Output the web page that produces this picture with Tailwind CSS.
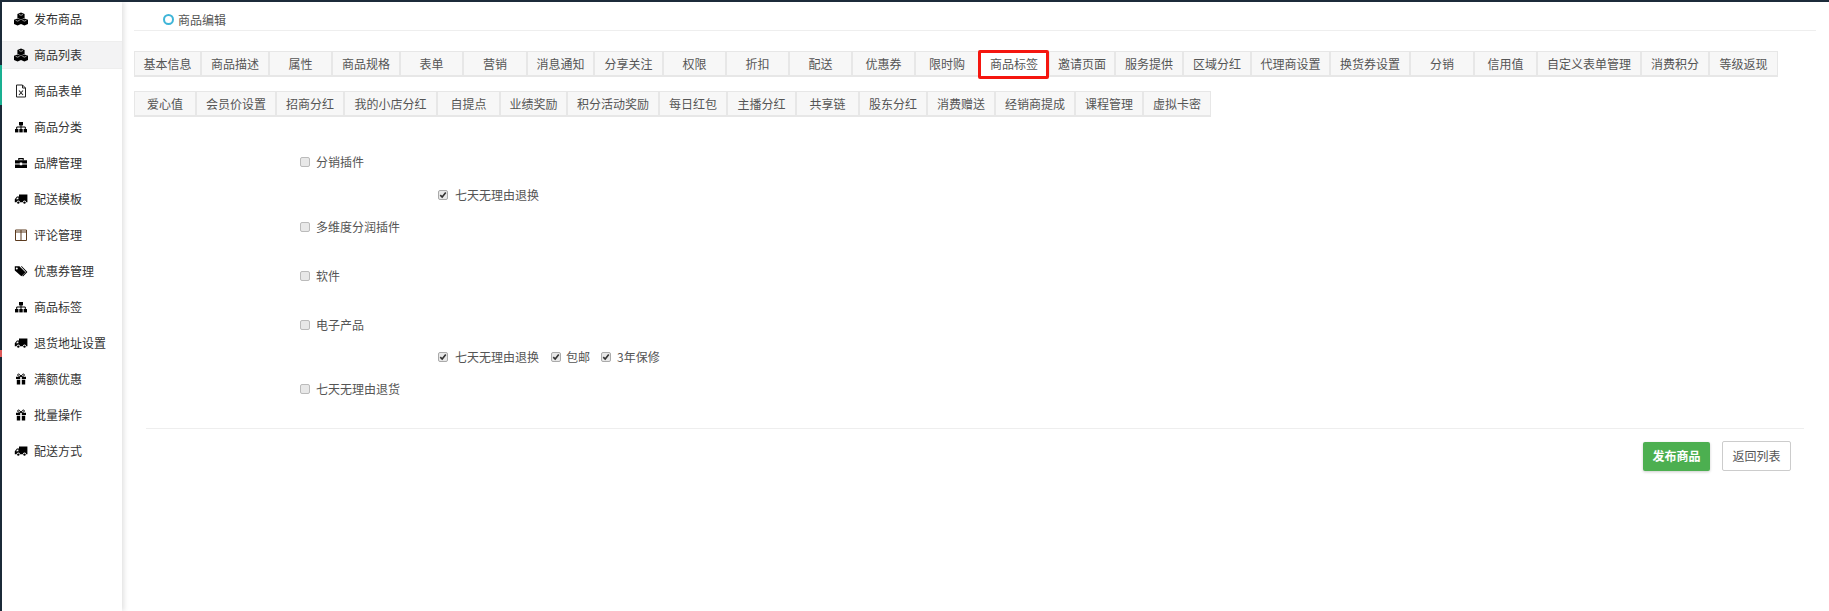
<!DOCTYPE html>
<html lang="zh-CN">
<head>
<meta charset="UTF-8" />
<title>商品编辑</title>
<script src="https://cdn.jsdelivr.net/npm/@tailwindcss/browser@4"></script>
</head>
<body class="bg-white text-[#333] text-[12px] font-['Noto_Sans_CJK_SC','Liberation_Sans',sans-serif]">

<!-- icon set -->
<svg class="hidden">
  <symbol id="i-cubes" viewBox="0 0 14 14">
    <path d="M7 .6 10.6 2V6L7 7.4 3.4 6V2Z"/><path d="M3.6 6.4 7 7.8V12L3.6 13.4 0 12V7.8Z"/><path d="M10.4 6.4 14 7.8V12L10.4 13.4 7 12V7.8Z"/>
    <path d="M5 2.5 7 3.3 9 2.5M1.6 8.3 3.6 9.1 5.6 8.3M8.4 8.3 10.4 9.1 12.4 8.3" fill="none" stroke="#fff" stroke-width=".6"/>
  </symbol>
  <symbol id="i-file" viewBox="0 0 14 14">
    <path d="M2.5 1H8.5L11.5 4V13H2.5Z M8.5 1V4H11.5" fill="none" stroke="#222" stroke-width="1"/>
    <path d="M5 6.5 9 11M9 6.5 5 11" fill="none" stroke="#222" stroke-width="1.1"/>
  </symbol>
  <symbol id="i-sitemap" viewBox="0 0 14 14">
    <rect x="5" y="2" width="4" height="3.4"/><rect x="1" y="9" width="3.4" height="3.4"/><rect x="5.3" y="9" width="3.4" height="3.4"/><rect x="9.6" y="9" width="3.4" height="3.4"/>
    <path d="M2.7 9V7H11.3V9M7 5V9" fill="none" stroke="#000" stroke-width="1"/>
  </symbol>
  <symbol id="i-briefcase" viewBox="0 0 14 14">
    <path d="M1 4.2H13V7.4H8.2V6.6H5.8V7.4H1ZM1 8.4H5.8V9.2H8.2V8.4H13V12H1Z"/>
    <path d="M4.8 4.2V2.6H9.2V4.2" fill="none" stroke="#000" stroke-width="1.1"/>
  </symbol>
  <symbol id="i-truck" viewBox="0 0 14 14">
    <path d="M13.4 2.6V10.2H12.2A1.7 1.7 0 0 0 8.8 10.2H6A1.7 1.7 0 0 0 2.6 10.2H.8V7.2L3 4.6H5V2.6ZM2 7.2H4.4V5.6H3.4Z"/>
    <circle cx="4.3" cy="10.6" r="1.2"/><circle cx="10.5" cy="10.6" r="1.2"/>
  </symbol>
  <symbol id="i-columns" viewBox="0 0 14 14">
    <path d="M1.5 2H12.5V12.5H1.5Z M7 2V12.5 M1.5 4H12.5" fill="none" stroke="#5b3a1e" stroke-width="1"/>
  </symbol>
  <symbol id="i-tags" viewBox="0 0 14 14">
    <path d="M.8 2.2H5.4L11.4 8.2 7.4 12.2 .8 6.6ZM2.8 3.4A1 1 0 1 0 2.8 5.4 1 1 0 1 0 2.8 3.4Z" fill-rule="evenodd"/>
    <path d="M6.8 2.2H7.8L13.4 8 9 12.4 8.2 11.8 12 8Z"/>
  </symbol>
  <symbol id="i-gift" viewBox="0 0 14 14">
    <path d="M2 4.8H6.2V7H2ZM7.8 4.8H12V7H7.8ZM2.8 7.8H6.2V12.6H2.8ZM7.8 7.8H11.2V12.6H7.8Z"/>
    <path d="M7 4.4C5.6 1.4 3.4 1.6 3.6 3.2 3.7 4.2 5.6 4.4 7 4.4 8.4 4.4 10.3 4.2 10.4 3.2 10.6 1.6 8.4 1.4 7 4.4Z" fill="none" stroke="#000" stroke-width="1"/>
  </symbol>
  <symbol id="i-check" viewBox="0 0 9 9">
    <path d="M1.4 4.6 3.6 6.8 7.6 1.8" fill="none" stroke="#333" stroke-width="1.8"/>
  </symbol>
</svg>

<div class="h-[2px] bg-[#1c2b3a]"></div>

<div class="flex h-[609px] overflow-hidden">
  <!-- dark strip -->
  <div class="w-[2px] flex flex-col bg-[#1c2b3a]">
    <div class="h-[63px]"></div>
    <div class="h-[40px] bg-[#1ab394]"></div>
    <div class="h-[245px]"></div>
    <div class="h-[7px] bg-[#e05a5a]"></div>
  </div>

  <!-- sidebar -->
  <aside class="w-[120px] shrink-0 bg-white shadow-[2px_0_5px_rgba(0,0,0,0.12)] relative">
    <ul class="-mt-px">
      <li class="h-9 flex items-center pl-[12px] gap-[6px]"><svg class="w-[14px] h-[14px]"><use href="#i-cubes"/></svg>发布商品</li>
      <li class="h-7 mt-1 mb-1 flex items-center pl-[12px] gap-[6px] bg-[#f3f3f4] border-y border-[#eeeeee]"><svg class="w-[14px] h-[14px]"><use href="#i-cubes"/></svg>商品列表</li>
      <li class="h-9 flex items-center pl-[12px] gap-[6px]"><svg class="w-[14px] h-[14px]"><use href="#i-file"/></svg>商品表单</li>
      <li class="h-9 flex items-center pl-[12px] gap-[6px]"><svg class="w-[14px] h-[14px]"><use href="#i-sitemap"/></svg>商品分类</li>
      <li class="h-9 flex items-center pl-[12px] gap-[6px]"><svg class="w-[14px] h-[14px]"><use href="#i-briefcase"/></svg>品牌管理</li>
      <li class="h-9 flex items-center pl-[12px] gap-[6px]"><svg class="w-[14px] h-[14px]"><use href="#i-truck"/></svg>配送模板</li>
      <li class="h-9 flex items-center pl-[12px] gap-[6px]"><svg class="w-[14px] h-[14px]"><use href="#i-columns"/></svg>评论管理</li>
      <li class="h-9 flex items-center pl-[12px] gap-[6px]"><svg class="w-[14px] h-[14px]"><use href="#i-tags"/></svg>优惠券管理</li>
      <li class="h-9 flex items-center pl-[12px] gap-[6px]"><svg class="w-[14px] h-[14px]"><use href="#i-sitemap"/></svg>商品标签</li>
      <li class="h-9 flex items-center pl-[12px] gap-[6px]"><svg class="w-[14px] h-[14px]"><use href="#i-truck"/></svg>退货地址设置</li>
      <li class="h-9 flex items-center pl-[12px] gap-[6px]"><svg class="w-[14px] h-[14px]"><use href="#i-gift"/></svg>满额优惠</li>
      <li class="h-9 flex items-center pl-[12px] gap-[6px]"><svg class="w-[14px] h-[14px]"><use href="#i-gift"/></svg>批量操作</li>
      <li class="h-9 flex items-center pl-[12px] gap-[6px]"><svg class="w-[14px] h-[14px]"><use href="#i-truck"/></svg>配送方式</li>
    </ul>
  </aside>

  <!-- main -->
  <main class="flex-1 pl-3 pr-[13px]">
    <div class="h-[29px] flex items-center pt-[7px] pl-[29px] gap-[4px] border-b border-[#eeeeee]">
      <span class="w-[11px] h-[11px] rounded-full border-2 border-[#3fb5d8]"></span>
      <span class="text-[#555]">商品编辑</span>
    </div>

    <!-- tabs row 1 -->
    <div class="flex mt-[20px] h-[26px] text-[#555]">
      <a class="w-[67px] flex items-center justify-center bg-[#f7f7f7] border border-b-2 border-[#e7e7e7]">基本信息</a>
      <a class="w-[68px] flex items-center justify-center bg-[#f7f7f7] border border-b-2 border-[#e7e7e7]">商品描述</a>
      <a class="w-[63px] flex items-center justify-center bg-[#f7f7f7] border border-b-2 border-[#e7e7e7]">属性</a>
      <a class="w-[68px] flex items-center justify-center bg-[#f7f7f7] border border-b-2 border-[#e7e7e7]">商品规格</a>
      <a class="w-[63px] flex items-center justify-center bg-[#f7f7f7] border border-b-2 border-[#e7e7e7]">表单</a>
      <a class="w-[64px] flex items-center justify-center bg-[#f7f7f7] border border-b-2 border-[#e7e7e7]">营销</a>
      <a class="w-[67px] flex items-center justify-center bg-[#f7f7f7] border border-b-2 border-[#e7e7e7]">消息通知</a>
      <a class="w-[69px] flex items-center justify-center bg-[#f7f7f7] border border-b-2 border-[#e7e7e7]">分享关注</a>
      <a class="w-[63px] flex items-center justify-center bg-[#f7f7f7] border border-b-2 border-[#e7e7e7]">权限</a>
      <a class="w-[63px] flex items-center justify-center bg-[#f7f7f7] border border-b-2 border-[#e7e7e7]">折扣</a>
      <a class="w-[63px] flex items-center justify-center bg-[#f7f7f7] border border-b-2 border-[#e7e7e7]">配送</a>
      <a class="w-[63px] flex items-center justify-center bg-[#f7f7f7] border border-b-2 border-[#e7e7e7]">优惠券</a>
      <a class="w-[64px] flex items-center justify-center bg-[#f7f7f7] border border-b-2 border-[#e7e7e7]">限时购</a>
      <a class="relative w-[70px] flex items-center justify-center bg-white">商品标签<span class="absolute -left-px right-0 -top-px -bottom-[2px] border-[3px] border-[#f5160f] rounded-[2px]"></span></a>
      <a class="w-[66px] flex items-center justify-center bg-[#f7f7f7] border border-b-2 border-[#e7e7e7]">邀请页面</a>
      <a class="w-[68px] flex items-center justify-center bg-[#f7f7f7] border border-b-2 border-[#e7e7e7]">服务提供</a>
      <a class="w-[68px] flex items-center justify-center bg-[#f7f7f7] border border-b-2 border-[#e7e7e7]">区域分红</a>
      <a class="w-[79px] flex items-center justify-center bg-[#f7f7f7] border border-b-2 border-[#e7e7e7]">代理商设置</a>
      <a class="w-[80px] flex items-center justify-center bg-[#f7f7f7] border border-b-2 border-[#e7e7e7]">换货券设置</a>
      <a class="w-[64px] flex items-center justify-center bg-[#f7f7f7] border border-b-2 border-[#e7e7e7]">分销</a>
      <a class="w-[63px] flex items-center justify-center bg-[#f7f7f7] border border-b-2 border-[#e7e7e7]">信用值</a>
      <a class="w-[104px] flex items-center justify-center bg-[#f7f7f7] border border-b-2 border-[#e7e7e7]">自定义表单管理</a>
      <a class="w-[68px] flex items-center justify-center bg-[#f7f7f7] border border-b-2 border-[#e7e7e7]">消费积分</a>
      <a class="w-[69px] flex items-center justify-center bg-[#f7f7f7] border border-b-2 border-[#e7e7e7]">等级返现</a>
    </div>

    <!-- tabs row 2 -->
    <div class="flex mt-[14px] h-[26px] text-[#555]">
      <a class="w-[62px] flex items-center justify-center bg-[#f7f7f7] border border-b-2 border-[#e7e7e7]">爱心值</a>
      <a class="w-[80px] flex items-center justify-center bg-[#f7f7f7] border border-b-2 border-[#e7e7e7]">会员价设置</a>
      <a class="w-[68px] flex items-center justify-center bg-[#f7f7f7] border border-b-2 border-[#e7e7e7]">招商分红</a>
      <a class="w-[93px] flex items-center justify-center bg-[#f7f7f7] border border-b-2 border-[#e7e7e7]">我的小店分红</a>
      <a class="w-[63px] flex items-center justify-center bg-[#f7f7f7] border border-b-2 border-[#e7e7e7]">自提点</a>
      <a class="w-[67px] flex items-center justify-center bg-[#f7f7f7] border border-b-2 border-[#e7e7e7]">业绩奖励</a>
      <a class="w-[92px] flex items-center justify-center bg-[#f7f7f7] border border-b-2 border-[#e7e7e7]">积分活动奖励</a>
      <a class="w-[68px] flex items-center justify-center bg-[#f7f7f7] border border-b-2 border-[#e7e7e7]">每日红包</a>
      <a class="w-[69px] flex items-center justify-center bg-[#f7f7f7] border border-b-2 border-[#e7e7e7]">主播分红</a>
      <a class="w-[63px] flex items-center justify-center bg-[#f7f7f7] border border-b-2 border-[#e7e7e7]">共享链</a>
      <a class="w-[68px] flex items-center justify-center bg-[#f7f7f7] border border-b-2 border-[#e7e7e7]">股东分红</a>
      <a class="w-[68px] flex items-center justify-center bg-[#f7f7f7] border border-b-2 border-[#e7e7e7]">消费赠送</a>
      <a class="w-[80px] flex items-center justify-center bg-[#f7f7f7] border border-b-2 border-[#e7e7e7]">经销商提成</a>
      <a class="w-[68px] flex items-center justify-center bg-[#f7f7f7] border border-b-2 border-[#e7e7e7]">课程管理</a>
      <a class="w-[68px] flex items-center justify-center bg-[#f7f7f7] border border-b-2 border-[#e7e7e7]">虚拟卡密</a>
    </div>

    <!-- tag checkboxes -->
    <form class="text-[#555]">
      <div class="h-5 mt-[35px] ml-[166px] flex items-center gap-[6px]"><span class="w-[10px] h-[10px] rounded-[2px] border border-[#bbb] bg-[#e8e8e8]"></span>分销插件</div>
      <div class="h-5 mt-[13px] ml-[304px] flex items-center"><span class="w-[10px] h-[10px] rounded-[2px] border border-[#aaa] bg-[#e8e8e8] flex"><svg class="w-[8px] h-[8px]"><use href="#i-check"/></svg></span><span class="ml-[7px]">七天无理由退换</span></div>
      <div class="h-5 mt-[12px] ml-[166px] flex items-center gap-[6px]"><span class="w-[10px] h-[10px] rounded-[2px] border border-[#bbb] bg-[#e8e8e8]"></span>多维度分润插件</div>
      <div class="h-5 mt-[29px] ml-[166px] flex items-center gap-[6px]"><span class="w-[10px] h-[10px] rounded-[2px] border border-[#bbb] bg-[#e8e8e8]"></span>软件</div>
      <div class="h-5 mt-[29px] ml-[166px] flex items-center gap-[6px]"><span class="w-[10px] h-[10px] rounded-[2px] border border-[#bbb] bg-[#e8e8e8]"></span>电子产品</div>
      <div class="h-5 mt-[12px] ml-[304px] flex items-center">
        <span class="w-[10px] h-[10px] rounded-[2px] border border-[#aaa] bg-[#e8e8e8] flex"><svg class="w-[8px] h-[8px]"><use href="#i-check"/></svg></span><span class="ml-[7px]">七天无理由退换</span>
        <span class="ml-[12px] w-[10px] h-[10px] rounded-[2px] border border-[#aaa] bg-[#e8e8e8] flex"><svg class="w-[8px] h-[8px]"><use href="#i-check"/></svg></span><span class="ml-[5px]">包邮</span>
        <span class="ml-[11px] w-[10px] h-[10px] rounded-[2px] border border-[#aaa] bg-[#e8e8e8] flex"><svg class="w-[8px] h-[8px]"><use href="#i-check"/></svg></span><span class="ml-[6px]">3年保修</span>
      </div>
      <div class="h-5 mt-[12px] ml-[166px] flex items-center gap-[6px]"><span class="w-[10px] h-[10px] rounded-[2px] border border-[#bbb] bg-[#e8e8e8]"></span>七天无理由退货</div>

      <div class="mt-[29px] mx-3 border-t border-[#eeeeee]"></div>

      <div class="mt-[12px] pr-[25px] flex justify-end items-center gap-3">
        <button type="button" class="w-[67px] h-[29px] rounded-[2px] bg-[#4caf50] text-white font-bold shadow-[0_1px_3px_rgba(0,0,0,0.2)]">发布商品</button>
        <button type="button" class="w-[69px] h-[30px] rounded-[2px] bg-white border border-[#ccc] text-[#555]">返回列表</button>
      </div>
    </form>
  </main>
</div>
</body>
</html>
